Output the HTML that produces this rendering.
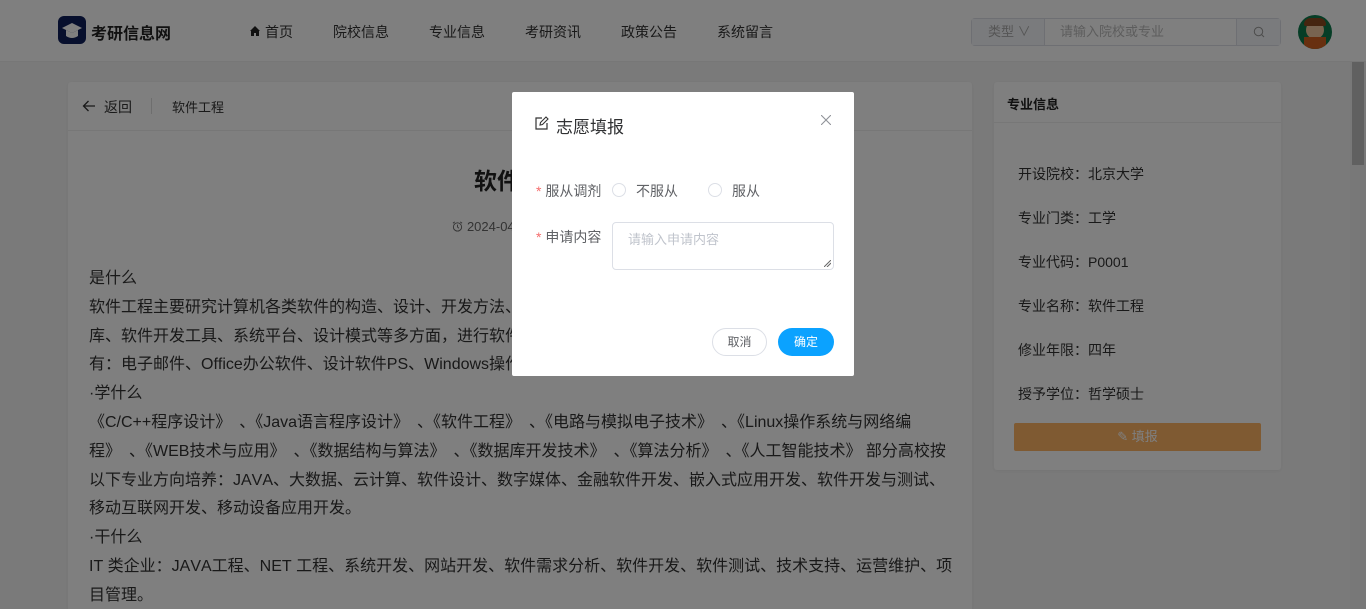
<!DOCTYPE html>
<html><head><meta charset="utf-8"><style>
*{margin:0;padding:0;box-sizing:border-box}
html{overflow:hidden;width:1366px;height:609px}
body{width:1366px;height:609px;overflow:hidden;background:#f5f5f5;font-family:"Liberation Sans","Noto Sans CJK SC",sans-serif;color:#333;position:relative;font-kerning:none}
.hdr{position:absolute;left:0;top:0;width:1366px;height:62px;background:#fff;border-bottom:1px solid #eee}
.logo{position:absolute;left:58px;top:16px;width:28px;height:28px;background:#0e1f5b;border-radius:6px}
.logot{position:absolute;left:91px;top:20px;font-size:16px;font-weight:bold;color:#222}
.nav{position:absolute;top:22px;font-size:14px;color:#333}
.search{position:absolute;left:971px;top:18px;width:310px;height:28px;border:1px solid #dcdfe6;border-radius:4px;background:#fff}
.search .t{position:absolute;left:0;top:0;width:73px;height:26px;background:#f5f7fa;border-right:1px solid #dcdfe6;font-size:13px;color:#aaa;line-height:26px;padding-left:16px}
.search .p{position:absolute;left:88px;top:0;line-height:26px;font-size:13px;color:#bbb}
.search .b{position:absolute;right:0;top:0;width:44px;height:26px;background:#f5f7fa;border-left:1px solid #dcdfe6}
.av{position:absolute;left:1298px;top:15px;width:34px;height:34px;border-radius:50%;background:#0c7a4c;overflow:hidden}
.card{position:absolute;background:#fff;border-radius:3px;box-shadow:0 1px 4px rgba(0,0,0,.06)}
.txt{position:absolute;left:21px;font-size:16px;line-height:28.8px;color:#333;white-space:nowrap;font-feature-settings:"halt" 0,"palt" 0;font-kerning:none}
.sb{position:absolute;left:1350px;top:62px;width:16px;height:547px;background:#f1f1f1}
.sb i{position:absolute;left:2px;top:0;width:12px;height:103px;background:#c1c1c1}
.ov{position:absolute;left:0;top:0;width:1366px;height:609px;background:rgba(0,0,0,.5)}
.dlg{position:absolute;left:512px;top:92px;width:342px;height:284px;background:#fff;border-radius:2px}
.rad{position:absolute;width:14px;height:14px;border:1px solid #dcdfe6;border-radius:50%}
.ri{position:absolute;left:1018px;font-size:14px;color:#333}
</style></head><body>
<div class="hdr">
<div class="logo"><svg width="28" height="28" viewBox="0 0 28 28"><path d="M4 12 L14 7 L24 12 L14 17Z" fill="#fff"/><path d="M8 14 V20 Q14 24 20 20 V14 L14 17Z" fill="#fff"/></svg></div>
<div class="logot">考研信息网</div>
<svg style="position:absolute;left:249px;top:25px" width="12" height="12" viewBox="0 0 12 12"><path d="M6 1 L11 6 H10 V11 H7 V8 H5 V11 H2 V6 H1Z" fill="#222"/></svg>
<div class="nav" style="left:265px">首页</div>
<div class="nav" style="left:333px">院校信息</div>
<div class="nav" style="left:429px">专业信息</div>
<div class="nav" style="left:525px">考研资讯</div>
<div class="nav" style="left:621px">政策公告</div>
<div class="nav" style="left:717px">系统留言</div>
<div class="search"><div class="t">类型 ∨</div><div class="p">请输入院校或专业</div><div class="b"><svg style="position:absolute;left:16px;top:7px" width="12" height="12" viewBox="0 0 12 12"><circle cx="5.5" cy="5.5" r="4.2" stroke="#999" fill="none"/><path d="M8.5 8.5 L11 11" stroke="#999"/></svg></div></div>
<div class="av"><div style="position:absolute;left:8px;top:6px;width:18px;height:18px;border-radius:50%;background:#f0c8a0"></div><div style="position:absolute;left:6px;top:3px;width:22px;height:8px;border-radius:8px 8px 2px 2px;background:#8a4a20"></div><div style="position:absolute;left:6px;top:22px;width:22px;height:14px;background:#d06020"></div></div>
</div>

<div class="card" style="left:68px;top:82px;width:904px;height:527px;border-radius:3px 3px 0 0">
<div style="position:absolute;left:0;top:48px;width:904px;height:1px;background:#eee"></div>
<svg style="position:absolute;left:14px;top:17px" width="14" height="14" viewBox="0 0 14 14"><path d="M13 7 H1.5 M6.5 2 L1.5 7 L6.5 12" stroke="#333" fill="none" stroke-width="1.3"/></svg>
<div style="position:absolute;left:36px;top:15px;font-size:14px;color:#333">返回</div>
<div style="position:absolute;left:83px;top:16px;width:1px;height:16px;background:#ddd"></div>
<div style="position:absolute;left:104px;top:15px;font-size:13px;color:#333">软件工程</div>
<div style="position:absolute;left:0;width:904px;top:80px;text-align:center;font-size:23px;font-weight:bold;color:#222">软件工程</div>
<div style="position:absolute;left:0;width:904px;top:137px;text-align:center;font-size:13px;color:#666"><svg width="11" height="11" viewBox="0 0 12 12" style="vertical-align:-1px"><circle cx="6" cy="6.5" r="4.5" stroke="#666" fill="none"/><path d="M6 4 V6.5 L7.5 8 M1 2.5 L3 1 M11 2.5 L9 1" stroke="#666" fill="none"/></svg> 2024-04-10 12:00:00</div>
<div class="txt" style="top:183px">是什么<br>软件工程主要研究计算机各类软件的构造、设计、开发方法、维护及管理方法等，涉及程序设计语言、数据<br>库、软件开发工具、系统平台、设计模式等多方面，进行软件开发、测试和维护工作等，常见的软件<br>有：电子邮件、Office办公软件、设计软件PS、Windows操作系统、手机APP、Minecraft 以及 Game 游戏<br>·学什么<br>《C/C++程序设计》&#12288;、《Java语言程序设计》&#12288;、《软件工程》&#12288;、《电路与模拟电子技术》&#12288;、《Linux操作系统与网络编<br>程》&#12288;、《WEB技术与应用》&#12288;、《数据结构与算法》&#12288;、《数据库开发技术》&#12288;、《算法分析》&#12288;、《人工智能技术》 部分高校按<br>以下专业方向培养：JAVA、大数据、云计算、软件设计、数字媒体、金融软件开发、嵌入式应用开发、软件开发与测试、<br>移动互联网开发、移动设备应用开发。<br>·干什么<br>IT 类企业：JAVA工程、NET 工程、系统开发、网站开发、软件需求分析、软件开发、软件测试、技术支持、运营维护、项<br>目管理。</div>
</div>

<div class="card" style="left:994px;top:82px;width:287px;height:388px">
<div style="position:absolute;left:13px;top:12px;font-size:13px;font-weight:bold;color:#222">专业信息</div>
<div style="position:absolute;left:0;top:40px;width:287px;height:1px;background:#eee"></div>
</div>
<div class="ri" style="top:164px">开设院校：北京大学</div>
<div class="ri" style="top:208px">专业门类：工学</div>
<div class="ri" style="top:252px">专业代码：P0001</div>
<div class="ri" style="top:296px">专业名称：软件工程</div>
<div class="ri" style="top:340px">修业年限：四年</div>
<div class="ri" style="top:384px">授予学位：哲学硕士</div>
<div style="position:absolute;left:1014px;top:423px;width:247px;height:28px;background:#feb464;border-radius:2px;color:#fff;font-size:13px;text-align:center;line-height:28px">✎ 填报</div>

<div class="sb"><i></i></div>
<div class="ov"></div>

<div class="dlg">
<svg style="position:absolute;left:23px;top:24px" width="14" height="14" viewBox="0 0 14 14"><path d="M12 7 V13 H1 V2 H7" stroke="#333" fill="none" stroke-width="1.2"/><path d="M5 9 L5.5 6.5 L11 1 L13 3 L7.5 8.5Z" stroke="#333" fill="none" stroke-width="1.1"/></svg>
<div style="position:absolute;left:44px;top:21px;font-size:17px;color:#303133">志愿填报</div>
<svg style="position:absolute;left:309px;top:23px" width="10" height="10" viewBox="0 0 10 10"><path d="M0 0 L10 10 M10 0 L0 10" stroke="#909399" stroke-width="1.1"/></svg>
<div style="position:absolute;left:24px;top:89px;font-size:14px;color:#606266"><span style="color:#f56c6c">*</span> 服从调剂</div>
<div class="rad" style="left:100px;top:91px"></div>
<div style="position:absolute;left:124px;top:89px;font-size:14px;color:#606266">不服从</div>
<div class="rad" style="left:196px;top:91px"></div>
<div style="position:absolute;left:220px;top:89px;font-size:14px;color:#606266">服从</div>
<div style="position:absolute;left:24px;top:135px;font-size:14px;color:#606266"><span style="color:#f56c6c">*</span> 申请内容</div>
<div style="position:absolute;left:100px;top:130px;width:222px;height:48px;border:1px solid #dcdfe6;border-radius:4px"><div style="position:absolute;left:15px;top:6px;font-size:13px;color:#c0c4cc">请输入申请内容</div><svg style="position:absolute;right:2px;bottom:2px" width="7" height="7"><path d="M0 7 L7 0 M3 7 L7 3" stroke="#666"/></svg></div>
<div style="position:absolute;left:200px;top:236px;width:55px;height:28px;border:1px solid #dcdfe6;border-radius:14px;font-size:12px;color:#606266;text-align:center;line-height:26px">取消</div>
<div style="position:absolute;left:266px;top:236px;width:56px;height:28px;background:#0ba2ff;border-radius:14px;font-size:12px;color:#fff;text-align:center;line-height:28px">确定</div>
</div>
</body></html>
